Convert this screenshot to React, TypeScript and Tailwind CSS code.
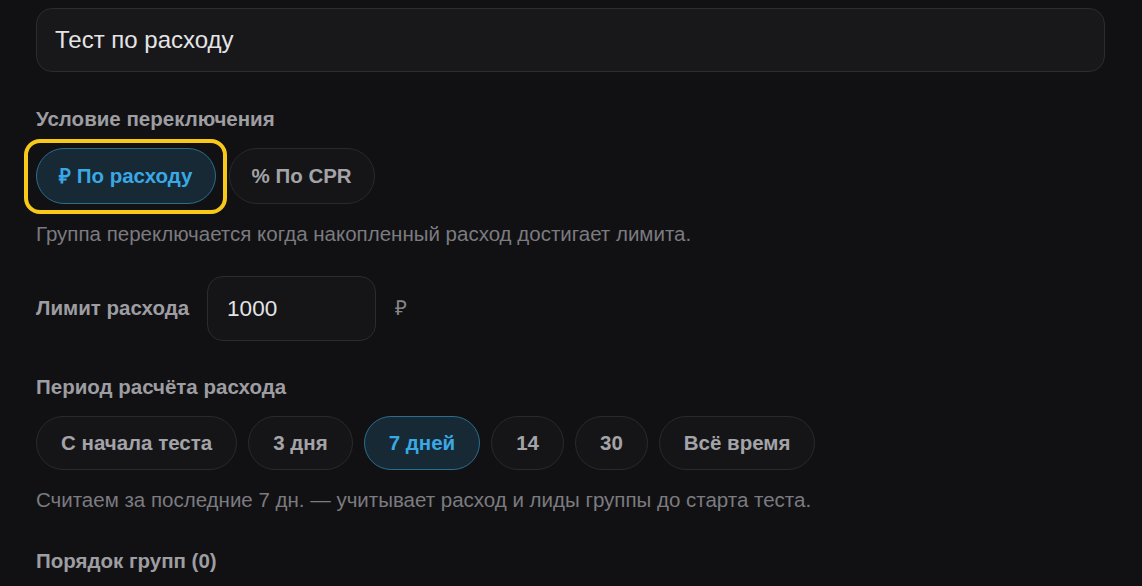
const chips = ['С начала теста', '3 дня', '7 дней', '14', '30', 'Всё время'];

const Chip = ({ label, active }: { label: string; active?: boolean }) => (
  <button
    className={
      active
        ? 'h-[54px] rounded-full border-[1.5px] border-[#2b6e8e] bg-[#172935] px-[24px] text-[20.5px] font-bold text-[#3aa8e4]'
        : 'h-[54px] rounded-full border-[1.5px] border-[#2a2a2d] bg-[#151517] px-[24px] text-[20.5px] font-bold text-[#a3a3a8]'
    }
  >
    {label}
  </button>
);

export default function App() {
  return (
    <div className="min-h-screen bg-[#111113] pl-[36px] pr-[37px] pt-[8px] font-['Liberation_Sans',Arial,sans-serif]">
      <div className="flex h-[64px] items-center rounded-[16px] border-[1.5px] border-[#2c2c2f] bg-[#18181a] px-[18px] text-[24px] text-[#e4e4e7]">
        Тест по расходу
      </div>

      <div className="mt-[35px] text-[20.5px] font-bold leading-[24px] text-[#9d9da2]">Условие переключения</div>

      <div className="mt-[17px] flex gap-[13px]">
        <div className="relative">
          <button className="h-[56px] rounded-full border-[1.5px] border-[#2b6e8e] bg-[#172935] px-[22px] text-[20.5px] font-bold text-[#3aa8e4]">
            ₽ По расходу
          </button>
          <div className="pointer-events-none absolute -left-[12px] -top-[9px] -right-[11px] -bottom-[10px] rounded-[16px] border-4 border-[#f9c91a]" />
        </div>
        <button className="h-[56px] rounded-full border-[1.5px] border-[#2a2a2d] bg-[#151517] px-[22px] text-[20.5px] font-bold text-[#a3a3a8]">
          % По CPR
        </button>
      </div>

      <p className="mt-[18px] text-[20.5px] leading-[24px] text-[#7b7b80]">
        Группа переключается когда накопленный расход достигает лимита.
      </p>

      <div className="mt-[30px] flex items-center">
        <span className="text-[20.5px] font-bold text-[#9d9da2]">Лимит расхода</span>
        <div className="ml-[18px] flex h-[65px] w-[169px] items-center rounded-[16px] border-[1.5px] border-[#2c2c2f] bg-[#151517] px-[19px] text-[22.5px] text-[#e4e4e7]">
          1000
        </div>
        <span className="ml-[19px] text-[20.5px] text-[#86868b]">₽</span>
      </div>

      <div className="mt-[34px] text-[20.5px] font-bold leading-[24px] text-[#9d9da2]">Период расчёта расхода</div>

      <div className="mt-[17px] flex gap-[11px]">
        {chips.map((c) => (
          <Chip key={c} label={c} active={c === '7 дней'} />
        ))}
      </div>

      <p className="mt-[18px] text-[20.5px] leading-[24px] text-[#7b7b80]">
        Считаем за последние 7 дн. — учитывает расход и лиды группы до старта теста.
      </p>

      <div className="mt-[37px] text-[20.5px] font-bold leading-[24px] text-[#9d9da2]">Порядок групп (0)</div>
    </div>
  );
}
